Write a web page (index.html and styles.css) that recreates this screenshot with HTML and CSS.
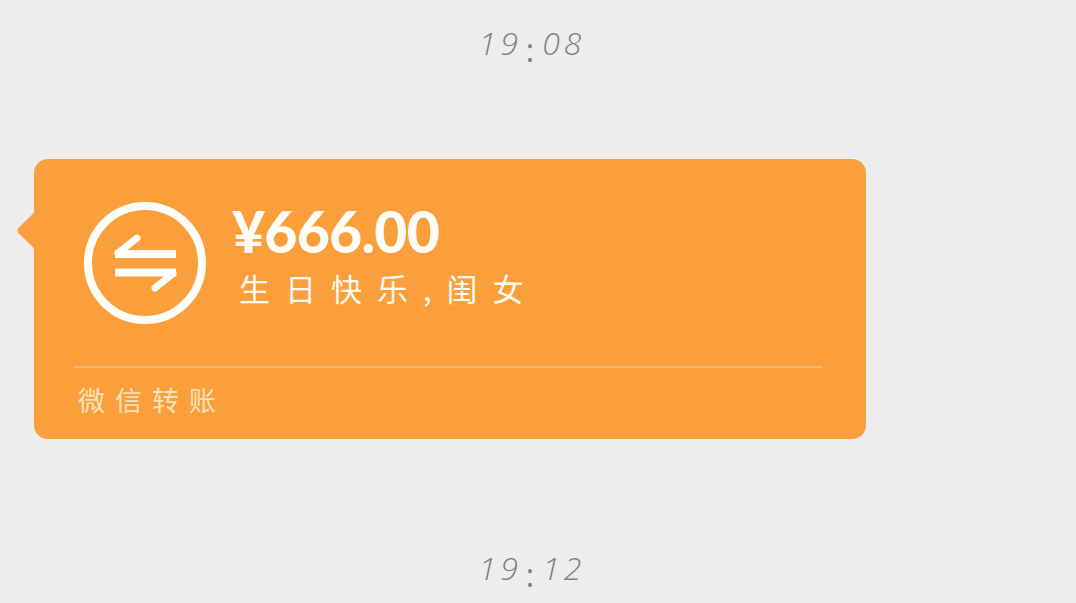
FILE: index.html
```html
<!DOCTYPE html>
<html lang="zh">
<head>
<meta charset="utf-8">
<title>微信转账</title>
<link rel="stylesheet" href="styles.css">
</head>
<body>
<main class="chat">
  <div class="time time-top">19<span class="colon">:</span>08</div>
  <article class="card">
    <svg class="tail" viewBox="0 0 20 40" aria-hidden="true"><path d="M20 0 L2.500 17 Q0 20 2.500 23 L20 40 Z"/></svg>
    <div class="card-main">
      <svg class="icon" viewBox="0 0 122 122" aria-hidden="true">
        <circle cx="61" cy="61" r="57" class="ring"/>
        <path d="M31 52 H92 M31 70.500 H92" class="bars"/>
        <path d="M34 51 L53 36 M89 71.500 L71 86" class="barbs"/>
      </svg>
      <div class="info">
        <div class="amount">¥666.00</div>
        <div class="note">生日快乐,闺女</div>
      </div>
    </div>
    <div class="card-foot">微信转账</div>
  </article>
  <div class="time time-bottom">19<span class="colon">:</span>12</div>
</main>
</body>
</html>
```
FILE: styles.css
```css
* { box-sizing: border-box; }
html, body { margin: 0; height: 100%; }
body {
  background: #ededed;
  overflow: hidden;
  font-family: "Noto Sans CJK SC", "Noto Sans", sans-serif;
}
.chat {
  width: 1076px;
  height: 603px;
  display: flex;
  flex-direction: column;
  overflow: hidden;
}
.time {
  align-self: center;
  font-family: "Open Sans", sans-serif;
  font-weight: 300;
  font-style: italic;
  font-size: 32px;
  line-height: 44px;
  letter-spacing: 4px;
  color: #7f7f7f;
  text-align: center;
  margin-left: -12px;
}
.colon {
  display: inline-block;
  font-style: normal;
  font-weight: 400;
  transform: translateY(7px);
  margin: 0 4px;
}
.time-top { margin-top: 21px; }
.time-bottom { margin-top: 107px; }
.card {
  position: relative;
  width: 832px;
  height: 280px;
  margin: 94px 0 0 34px;
  background: #fa9f3c;
  border-radius: 14px;
  display: flex;
  flex-direction: column;
  padding: 43px 44px 0 40px;
}
.tail {
  position: absolute;
  left: -18px;
  top: 53px;
  width: 19px;
  height: 37px;
  fill: #fa9f3c;
}
.card-main {
  display: flex;
  height: 166px;
  border-bottom: 2px solid #fcb76a;
  gap: 26px;
  padding-left: 10px;
}
.icon {
  width: 122px;
  height: 122px;
  flex: none;
}
.ring {
  fill: none;
  stroke: #fffdf8;
  stroke-width: 8;
}
.bars {
  fill: none;
  stroke: #fffdf8;
  stroke-width: 8;
}
.barbs {
  fill: none;
  stroke: #fffdf8;
  stroke-width: 7;
  stroke-linecap: round;
}
.info {
  display: flex;
  flex-direction: column;
}
.amount {
  font-family: Lato, sans-serif;
  font-weight: 900;
  font-size: 57px;
  line-height: 58px;
  letter-spacing: -0.700px;
  color: #fffdf8;
}
.note {
  font-size: 31px;
  line-height: 42px;
  letter-spacing: 15px;
  color: #fffaf0;
  font-weight: 400;
  padding-left: 7px;
  margin-top: 7px;
}
.card-foot {
  font-weight: 400;
  font-size: 27px;
  line-height: 36px;
  letter-spacing: 10px;
  color: #fde2b8;
  padding: 14px 0 0 4px;
}
```
